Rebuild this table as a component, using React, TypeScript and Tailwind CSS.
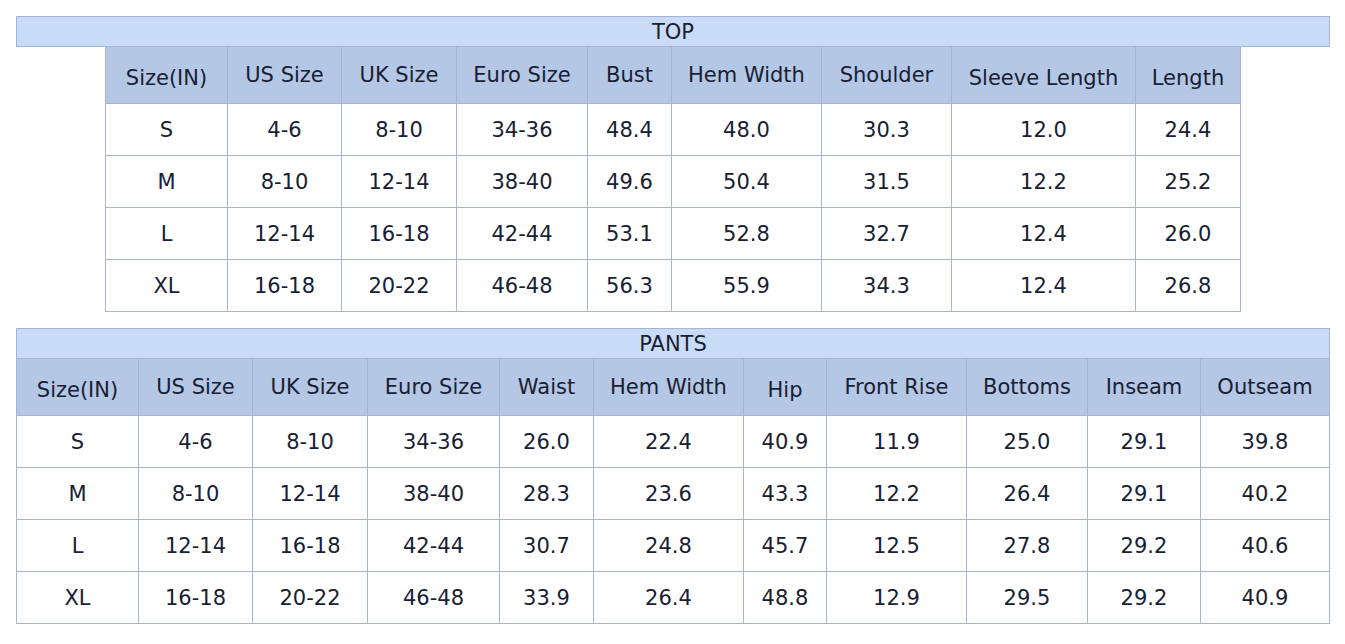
import React from 'react';

type Head = { label: string; low?: boolean };

interface SizeTableProps {
  title: string;
  heads: Head[];
  cols: string;
  rows: string[][];
  indent?: boolean;
}

const topHeads: Head[] = [
  { label: 'Size(IN)', low: true },
  { label: 'US Size' },
  { label: 'UK Size' },
  { label: 'Euro Size' },
  { label: 'Bust' },
  { label: 'Hem Width' },
  { label: 'Shoulder' },
  { label: 'Sleeve Length', low: true },
  { label: 'Length', low: true },
];

const topRows = [
  ['S', '4-6', '8-10', '34-36', '48.4', '48.0', '30.3', '12.0', '24.4'],
  ['M', '8-10', '12-14', '38-40', '49.6', '50.4', '31.5', '12.2', '25.2'],
  ['L', '12-14', '16-18', '42-44', '53.1', '52.8', '32.7', '12.4', '26.0'],
  ['XL', '16-18', '20-22', '46-48', '56.3', '55.9', '34.3', '12.4', '26.8'],
];

const pantsHeads: Head[] = [
  { label: 'Size(IN)', low: true },
  { label: 'US Size' },
  { label: 'UK Size' },
  { label: 'Euro Size' },
  { label: 'Waist' },
  { label: 'Hem Width' },
  { label: 'Hip', low: true },
  { label: 'Front Rise' },
  { label: 'Bottoms' },
  { label: 'Inseam' },
  { label: 'Outseam' },
];

const pantsRows = [
  ['S', '4-6', '8-10', '34-36', '26.0', '22.4', '40.9', '11.9', '25.0', '29.1', '39.8'],
  ['M', '8-10', '12-14', '38-40', '28.3', '23.6', '43.3', '12.2', '26.4', '29.1', '40.2'],
  ['L', '12-14', '16-18', '42-44', '30.7', '24.8', '45.7', '12.5', '27.8', '29.2', '40.6'],
  ['XL', '16-18', '20-22', '46-48', '33.9', '26.4', '48.8', '12.9', '29.5', '29.2', '40.9'],
];

const SizeTable: React.FC<SizeTableProps> = ({ title, heads, cols, rows, indent }) => (
  <div className="w-[1314px]">
    <div className="h-[31px] border border-[#a4b4d2] bg-[#c9dcf7] flex items-center justify-center">
      <span className="translate-y-[1px]">{title}</span>
    </div>
    <div className={indent ? 'pl-[89px]' : ''}>
      <div className={`grid ${cols} border-l border-[#a4b4d2]`}>
        {heads.map((h) => (
          <div
            key={h.label}
            className="h-[57px] bg-[#b4c7e5] border-r border-b border-[#a4b4d2] flex items-center justify-center whitespace-nowrap"
          >
            <span className={h.low ? 'translate-y-[3px]' : ''}>{h.label}</span>
          </div>
        ))}
        {rows.map((row, i) =>
          row.map((cell, j) => (
            <div
              key={`${i}-${j}`}
              className="h-[52px] bg-white border-r border-b border-[#a4b4d2] flex items-center justify-center"
            >
              <span className="translate-y-[1px]">{cell}</span>
            </div>
          ))
        )}
      </div>
    </div>
  </div>
);

export default function App() {
  return (
    <div className="w-[1345px] h-[644px] bg-white pt-4 pl-4 text-[21px] leading-none text-[#182033] font-['DejaVu_Sans',sans-serif] flex flex-col gap-4">
      <SizeTable
        title="TOP"
        heads={topHeads}
        cols="grid-cols-[122px_114px_115px_131px_84px_150px_130px_184px_105px] w-[1136px]"
        rows={topRows}
        indent
      />
      <SizeTable
        title="PANTS"
        heads={pantsHeads}
        cols="grid-cols-[122px_114px_115px_132px_94px_150px_83px_140px_121px_113px_129px] w-[1314px]"
        rows={pantsRows}
      />
    </div>
  );
}
